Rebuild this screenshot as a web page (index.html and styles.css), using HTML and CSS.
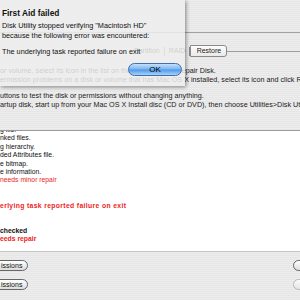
FILE: index.html
```html
<!DOCTYPE html>
<html>
<head>
    <title>Disk Utility - First Aid</title>
    <link rel="stylesheet" href="styles.css">
</head>
<body>
    <div class="window">
        <div class="toolbar"></div>
        <div class="tabs">
            <span class="tab">Partition</span>
            <span class="tab-sep"></span>
            <span class="tab">RAID</span>
            <span class="tab-sep"></span>
            <span class="tab tab-restore">Restore</span>
            <span class="tab-rule"></span>
        </div>
        <div class="help">
            <p>or volume, select its icon in the list on the left, and click Repair Disk.<br>ermission problems on a disk or volume that has Mac OS X installed, select its icon and click Repair Permissions.</p>
            <p>uttons to test the disk or permissions without changing anything.<br>artup disk, start up from your Mac OS X Install disc (CD or DVD), then choose Utilities&gt;Disk Utility.</p>
        </div>
        <div class="log">
            <div class="log-lines">
                <div>g file.</div>
                <div>nked files.</div>
                <div>g hierarchy.</div>
                <div>ded Attributes file.</div>
                <div>e bitmap.</div>
                <div>e information.</div>
                <div class="warn">needs minor repair</div>
                <div class="blank"></div>
                <div class="blank"></div>
                <div class="warn strong wide">erlying task reported failure on exit</div>
                <div class="blank"></div>
                <div class="blank"></div>
                <div class="strong">checked</div>
                <div class="warn strong">eeds repair</div>
            </div>
        </div>
        <div class="actions">
            <div class="action-row">
                <button class="btn">issions</button>
                <button class="btn btn-right"></button>
            </div>
            <div class="action-row">
                <button class="btn">issions</button>
                <button class="btn btn-right disabled"></button>
            </div>
        </div>

        <!-- alert sheet dropped over the window -->
        <div class="sheet">
            <div class="sheet-title">First Aid failed</div>
            <div class="sheet-msg">Disk Utility stopped verifying "Macintosh HD"<br>because the following error was encountered:</div>
            <div class="sheet-error">The underlying task reported failure on exit</div>
            <div class="sheet-buttons">
                <button class="ok">OK</button>
            </div>
        </div>
    </div>
</body>
</html>
```

FILE: styles.css
```css
body {
    margin: 0;
    font-family: "Liberation Sans", Arial, sans-serif;
    color: #111;
}
.window {
    position: relative;
    width: 300px;
    height: 300px;
    overflow: hidden;
    background: repeating-linear-gradient(#ededed 0 1px, #e6e6e6 1px 2px);
}
.toolbar {
    height: 32px;
    border-bottom: 1px solid #a2a2a2;
}
.tabs {
    display: flex;
    align-items: center;
    height: 12px;
    margin-top: 12px;
    padding-left: 130px;
    font-size: 7px;
}
.tab {
    padding: 0 4px;
    line-height: 12px;
    color: #222;
}
.tab-sep {
    width: 1px;
    height: 9px;
    background: #8a8a8a;
}
.tab-restore {
    width: 37px;
    height: 12px;
    box-sizing: border-box;
    padding: 0;
    text-align: center;
    line-height: 10px;
    border: 1px solid #8a8a8a;
    border-radius: 0 3px 3px 0;
    background: linear-gradient(#fdfdfd, #e9e9e9);
}
.tab-rule {
    flex: 1;
    height: 1px;
    background: #9a9a9a;
}
.help {
    display: flow-root;
    height: 63px;
    padding-top: 10px;
    font-size: 7.2px;
    line-height: 8.5px;
    white-space: nowrap;
    color: #1a1a1a;
}
.help p {
    margin: 0;
}
.help p + p {
    margin-top: 8px;
}
.log {
    height: 120px;
    overflow: hidden;
    background: #fff;
    border-top: 1px solid #9c9c9c;
    border-bottom: 1px solid #c4c4c4;
    font-size: 6.8px;
    line-height: 8.4px;
    white-space: nowrap;
}
.log-lines {
    margin-top: -5px;
}
.log .blank {
    height: 8.4px;
}
.log .warn {
    color: #ee1c25;
}
.log .strong {
    font-weight: bold;
}
.log .wide {
    letter-spacing: 0.35px;
}
.actions {
    display: flex;
    flex-direction: column;
    gap: 8px;
    padding-top: 8px;
}
.action-row {
    display: flex;
    justify-content: space-between;
}
.btn {
    height: 11px;
    margin-left: -10px;
    padding: 0 5px 0 10px;
    border: 1px solid #666;
    border-radius: 6px;
    background: linear-gradient(#fff, #dcdcdc);
    font: 7px "Liberation Sans", Arial, sans-serif;
    line-height: 9px;
    color: #111;
}
.btn-right {
    width: 40px;
    margin-left: 0;
    margin-right: -33px;
}
.btn.disabled {
    border-color: #b8b8b8;
    background: linear-gradient(#fafafa, #e6e6e6);
}
.sheet {
    position: absolute;
    top: 0;
    left: 0;
    width: 185px;
    box-sizing: border-box;
    padding: 8px 3px 10px 2px;
    background: rgba(238, 238, 238, 0.84);
    box-shadow: 1px 1px 4px rgba(0, 0, 0, 0.45);
    font-size: 7.3px;
    color: #111;
}
.sheet-title {
    font-size: 8.3px;
    font-weight: bold;
    line-height: 11px;
    margin-bottom: 2px;
}
.sheet-msg {
    line-height: 10px;
}
.sheet-error {
    margin-top: 6px;
    line-height: 10px;
}
.sheet-buttons {
    display: flex;
    justify-content: flex-end;
    margin-top: 6px;
}
.ok {
    width: 54px;
    height: 13px;
    padding: 0;
    border: 1px solid #3f6fae;
    border-radius: 7px;
    background: linear-gradient(#c2e0fb, #78b4f0 48%, #4f98e8 52%, #a6d3fa);
    font: 8px "Liberation Sans", Arial, sans-serif;
    color: #000;
}
```
